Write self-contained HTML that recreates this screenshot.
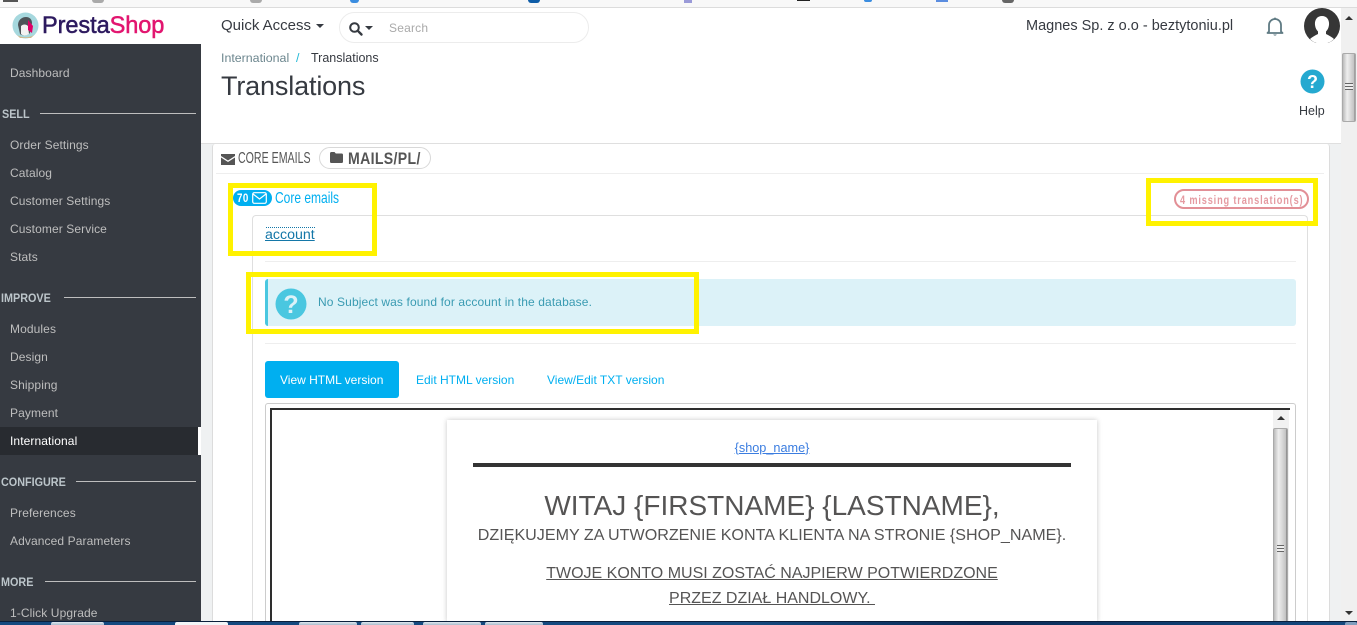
<!DOCTYPE html>
<html lang="en"><head><meta charset="utf-8"><title>Translations</title>
<style>
html,body{margin:0;padding:0}
body{width:1357px;height:625px;position:relative;overflow:hidden;background:#eff1f2;font-family:"Liberation Sans",Arial,sans-serif;color:#363a41}
.a{position:absolute;white-space:nowrap}
.b{position:absolute}
.n{font-size:12px;letter-spacing:.1px;color:#bebebe;left:10px;line-height:16px}
.h{font-size:12px;font-weight:bold;color:#bcc5ca;line-height:16px;transform:scaleX(.9);transform-origin:left center}
.r{position:absolute;height:1px;background:#bebebe;right:5px}
.cond{transform-origin:left center}
.tb{position:absolute;top:622px;height:3px;background:linear-gradient(#dfe8f0,#a9bccd);border-radius:2px 2px 0 0}
</style></head><body>

<!-- browser strip -->
<div class="b" style="left:0;top:0;width:1357px;height:7px;background:#f8f8f8"></div>
<div class="b" style="left:0;top:7px;width:1357px;height:1px;background:#dcdcdc"></div>
<div class="b" style="left:3px;top:0;width:15px;height:2px;background:#555"></div>
<div class="b" style="left:92px;top:0;width:12px;height:3px;background:#aaa;border-radius:0 0 6px 6px"></div>
<div class="b" style="left:250px;top:0;width:12px;height:3px;background:#aaa;border-radius:0 0 6px 6px"></div>
<div class="b" style="left:350px;top:0;width:9px;height:3px;background:#3b8de0;border-radius:0 0 6px 6px"></div>
<div class="b" style="left:528px;top:0;width:12px;height:3px;background:#0f5da8;border-radius:0 0 6px 6px"></div>
<div class="b" style="left:684px;top:0;width:8px;height:3px;background:#9a9ad8"></div>
<div class="b" style="left:797px;top:0;width:13px;height:1px;background:#222"></div>
<div class="b" style="left:864px;top:0;width:8px;height:2px;background:#3b8de0;border-radius:0 0 6px 6px"></div>
<div class="b" style="left:936px;top:0;width:12px;height:2px;background:#5b8de0"></div>
<div class="b" style="left:1002px;top:0;width:12px;height:3px;background:#666;border-radius:0 0 6px 6px"></div>

<!-- header -->
<div class="b" style="left:0;top:8px;width:1341px;height:36px;background:#fff"></div>
<div class="b" style="left:201px;top:44px;width:1140px;height:99px;background:#fff"></div>
<div class="b" style="left:201px;top:143px;width:1140px;height:1px;background:#dfdfdf"></div>

<svg class="b" style="left:12px;top:12px" width="27" height="27" viewBox="0 0 27 27">
<circle cx="13.5" cy="13.5" r="13" fill="#a6d8de"/>
<path d="M6 13c0-5 4-8 8-8s6 3 6 6l-2 10c-3 3-8 3-10 1z" fill="#4d5358"/>
<path d="M9 14c2-2 5-2 7 0l1 8c-3 2-6 2-8 0z" fill="#f2f2f2"/>
<path d="M16 8l5 6-1 7-4-3z" fill="#df0067"/>
<path d="M5 23c5 3 12 3 17 0l-3 3H8z" fill="#cdb98e"/>
</svg>
<div class="a" style="left:42px;top:11px;font-size:23.6px;line-height:30px;letter-spacing:-.1px;color:#2d1a5f;-webkit-text-stroke:.5px #2d1a5f">Presta<span style="color:#e2156f;-webkit-text-stroke:.5px #e2156f">Shop</span></div>

<div class="a" style="left:221px;top:17px;font-size:15px;line-height:18px;color:#363a41">Quick Access</div>
<div class="b" style="left:316px;top:24px;border:4px solid transparent;border-top:4px solid #363a41;border-bottom:0;border-left-width:4.5px;border-right-width:4.5px"></div>
<div class="b" style="left:339px;top:12px;width:248px;height:29px;border:1px solid #ececec;border-radius:16px;background:#fff"></div>
<svg class="b" style="left:348px;top:21px" width="16" height="16" viewBox="0 0 16 16"><circle cx="6.5" cy="6.5" r="4.3" fill="none" stroke="#363a41" stroke-width="2"/><path d="M9.8 9.8l3.7 3.7" stroke="#363a41" stroke-width="2.4" stroke-linecap="round"/></svg>
<div class="b" style="left:365px;top:26px;border:4px solid transparent;border-top:4px solid #363a41;border-bottom:0"></div>
<div class="a" style="left:389px;top:20px;font-size:12px;line-height:16px;letter-spacing:.2px;color:#a9a9a9">Search</div>

<div class="a" style="left:1026px;top:17px;font-size:14.5px;line-height:18px;color:#363a41">Magnes Sp. z o.o - beztytoniu.pl</div>
<svg class="b" style="left:1266px;top:16px" width="18" height="21" viewBox="0 0 18 21"><path d="M3 15.5V9a6 6 0 0 1 12 0v6.500l1.500 1.500h-15z" fill="none" stroke="#5f7a83" stroke-width="1.800" stroke-linejoin="round"/><path d="M7.200 18.500a2 2 0 0 0 3.600 0z" fill="#5f7a83"/><circle cx="9" cy="2.500" r="1" fill="#5f7a83"/></svg>
<svg class="b" style="left:1304px;top:8px" width="36" height="36" viewBox="0 0 36 36"><defs><clipPath id="av"><rect x="0" y="0" width="36" height="35"/></clipPath></defs><circle cx="18" cy="18" r="18" fill="#363636" clip-path="url(#av)"/><path d="M18 8c5 0 7.500 4 7 9-.4 3-1.500 5-3 6.500v2.500c3 1.500 6 3 8 5-3 3-7.500 5-12 5s-9-2-12-5c2-2 5-3.500 8-5v-2.500c-1.500-1.500-2.600-3.500-3-6.500-.5-5 2-9 7-9z" fill="#fff" clip-path="url(#av)"/></svg>

<div class="a" style="left:221px;top:50px;font-size:12.4px;line-height:16px;color:#6c868e">International</div>
<div class="a" style="left:296px;top:50px;font-size:12.4px;line-height:16px;color:#25b9d7">/</div>
<div class="a" style="left:311px;top:50px;font-size:12.5px;line-height:16px;color:#363a41">Translations</div>
<div class="a" style="left:221px;top:69px;font-size:27px;line-height:34px;letter-spacing:-.15px;color:#363a41">Translations</div>
<svg class="b" style="left:1300px;top:69px" width="25" height="25" viewBox="0 0 25 25"><circle cx="12.500" cy="12.500" r="12" fill="#25a9d0"/><text x="12.500" y="19" text-anchor="middle" font-family="Liberation Sans" font-weight="bold" font-size="18" fill="#fff">?</text></svg>
<div class="a" style="left:1299px;top:103px;font-size:12.5px;line-height:16px;color:#363a41">Help</div>

<!-- sidebar -->
<div class="b" style="left:0;top:44px;width:201px;height:578px;background:#363a41"></div>
<div class="a n" style="top:65px">Dashboard</div>
<div class="a h" style="left:2px;top:106px">SELL</div><div class="r" style="left:40px;top:113px;width:156px;right:auto"></div>
<div class="a n" style="top:137px">Order Settings</div>
<div class="a n" style="top:165px">Catalog</div>
<div class="a n" style="top:193px">Customer Settings</div>
<div class="a n" style="top:221px">Customer Service</div>
<div class="a n" style="top:249px">Stats</div>
<div class="a h" style="left:1px;top:290px">IMPROVE</div><div class="r" style="left:64px;top:297px;width:132px;right:auto"></div>
<div class="a n" style="top:321px">Modules</div>
<div class="a n" style="top:349px">Design</div>
<div class="a n" style="top:377px">Shipping</div>
<div class="a n" style="top:405px">Payment</div>
<div class="b" style="left:0;top:427px;width:201px;height:28px;background:#282b30"></div>
<div class="b" style="left:198px;top:427px;width:3px;height:28px;background:#fff"></div>
<div class="a n" style="top:433px;color:#fff">International</div>
<div class="a h" style="left:1px;top:474px">CONFIGURE</div><div class="r" style="left:76px;top:481px;width:120px;right:auto"></div>
<div class="a n" style="top:505px">Preferences</div>
<div class="a n" style="top:533px">Advanced Parameters</div>
<div class="a h" style="left:1px;top:574px">MORE</div><div class="r" style="left:45px;top:581px;width:151px;right:auto"></div>
<div class="a n" style="top:605px">1-Click Upgrade</div>

<!-- panel -->
<div class="b" style="left:212px;top:144px;width:1116px;height:478px;background:#fff;border-left:1px solid #dcdcdc;border-right:1px solid #dcdcdc;border-radius:3px 3px 0 0"></div>
<svg class="b" style="left:221px;top:154px" width="14" height="11" viewBox="0 0 14 11"><path d="M0 0h14v2L7 6.500 0 2z" fill="#555"/><path d="M0 3.500l7 4.500 7-4.500V11H0z" fill="#555"/></svg>
<div class="a cond" style="left:238px;top:150px;font-size:15.5px;line-height:17px;color:#555;transform:scaleX(.685)">CORE EMAILS</div>
<div class="b" style="left:319px;top:147px;width:110px;height:20px;border:1px solid #d8d8d8;border-radius:11px"></div>
<svg class="b" style="left:330px;top:152px" width="13" height="11" viewBox="0 0 13 11"><path d="M0 1.500C0 .7.500 0 1.300 0h3.200l1.300 1.500h6C12.500 1.500 13 2 13 2.800v7c0 .7-.5 1.200-1.200 1.200H1.200C.5 11 0 10.500 0 9.800z" fill="#555"/></svg>
<div class="a cond" style="left:348px;top:150px;font-size:17px;line-height:18px;font-weight:bold;letter-spacing:.4px;color:#555;transform:scaleX(.83)">MAILS/PL/</div>
<div class="b" style="left:216px;top:173px;width:1108px;height:1px;background:#eee"></div>

<div class="b" style="left:233px;top:190px;width:39px;height:16px;background:#00aff0;border-radius:8px"></div>
<div class="a cond" style="left:237px;top:192px;font-size:11.500px;line-height:15px;font-weight:bold;letter-spacing:.5px;color:#fff;transform:scaleX(.85)">70</div>
<svg class="b" style="left:252px;top:192px" width="15" height="12" viewBox="0 0 15 12"><rect x=".7" y=".7" width="13.600" height="10.600" rx="1.500" fill="none" stroke="#fff" stroke-width="1.200"/><path d="M1 2l6.500 5L14 2" fill="none" stroke="#fff" stroke-width="1.200"/></svg>
<div class="a cond" style="left:275px;top:190px;font-size:16px;line-height:17px;color:#00aff0;transform:scaleX(.75)">Core emails</div>

<div class="b" style="left:1174px;top:189px;width:135px;height:20px;border:2px solid #e28f96;border-radius:10px;box-sizing:border-box"></div>
<div class="a cond" style="left:1180px;top:194px;font-size:11.500px;line-height:14px;letter-spacing:1.050px;font-weight:bold;color:#e59aa1;transform:scaleX(.8)">4 missing translation(s)</div>

<!-- account box -->
<div class="b" style="left:252px;top:215px;width:1056px;height:407px;border:1px solid #dfdfdf;border-bottom:0;border-radius:4px 4px 0 0;box-sizing:border-box;background:#fff"></div>
<div class="a" style="left:265px;top:226px;font-size:14.2px;line-height:18px;color:#1477a8;text-decoration:underline">account</div>
<div class="b" style="left:266px;top:227px;width:49px;height:0;border-top:1px dotted #1477a8"></div>
<div class="b" style="left:265px;top:261px;width:1031px;height:1px;background:#eee"></div>

<div class="b" style="left:265px;top:279px;width:1031px;height:47px;background:#dcf2f8;border-radius:3px;border-left:3px solid #4ac7e0;box-sizing:border-box"></div>
<svg class="b" style="left:275px;top:288px" width="32" height="32" viewBox="0 0 32 32"><circle cx="16" cy="16" r="15.500" fill="#4ac7e0"/><text x="16" y="25" text-anchor="middle" font-family="Liberation Sans" font-weight="bold" font-size="25" fill="#dcf2f8">?</text></svg>
<div class="a" style="left:318px;top:294px;font-size:12px;line-height:16px;letter-spacing:.12px;color:#3a9bb2">No Subject was found for account in the database.</div>
<div class="b" style="left:265px;top:343px;width:1031px;height:1px;background:#eee"></div>

<div class="b" style="left:265px;top:361px;width:134px;height:37px;background:#00aff0;border-radius:3px"></div>
<div class="a" style="left:280px;top:372px;font-size:12px;line-height:16px;color:#fff">View HTML version</div>
<div class="a" style="left:416px;top:372px;font-size:12px;line-height:16px;color:#00aff0">Edit HTML version</div>
<div class="a" style="left:547px;top:372px;font-size:12px;line-height:16px;color:#00aff0">View/Edit TXT version</div>

<!-- iframe -->
<div class="b" style="left:265px;top:403px;width:1031px;height:219px;border:1px solid #ccc;border-bottom:0;border-radius:3px 3px 0 0;box-sizing:border-box;background:#fff"></div>
<div class="b" style="left:270px;top:408px;width:1020px;height:214px;border:2px solid #2e2e2e;border-width:2px 0 0 2px;box-sizing:border-box;background:#fff"></div>
<div class="b" style="left:1273px;top:410px;width:16px;height:212px;background:#f1f1f1"></div>
<div class="b" style="left:1277px;top:416px;border:4px solid transparent;border-bottom:4px solid #333;border-top:0"></div>
<div class="b" style="left:1273px;top:428px;width:15px;height:194px;background:linear-gradient(90deg,#bbb,#eee 35%,#c4c4c4 90%,#777);border-radius:2px 2px 0 0;box-sizing:border-box;border:1px solid #aaa;border-bottom:0"></div>
<div class="b" style="left:1277px;top:545px;width:7px;height:7px;background:repeating-linear-gradient(#666 0 1px,#eee 1px 3px)"></div>

<!-- mail card -->
<div class="b" style="left:447px;top:420px;width:650px;height:202px;background:#fff;box-shadow:0 0 5px rgba(0,0,0,.22)"></div>
<div class="a" style="left:447px;width:650px;text-align:center;top:440px;font-size:12.7px;line-height:16px;color:#3b7de0;text-decoration:underline">{shop_name}</div>
<div class="b" style="left:473px;top:463px;width:598px;height:4px;background:#333"></div>
<div class="a" style="left:447px;width:650px;text-align:center;top:489px;font-size:28px;line-height:34px;color:#555454">WITAJ {FIRSTNAME} {LASTNAME},</div>
<div class="a" style="left:447px;width:650px;text-align:center;top:525px;font-size:16.1px;line-height:20px;color:#555454">DZIĘKUJEMY ZA UTWORZENIE KONTA KLIENTA NA STRONIE {SHOP_NAME}.</div>
<div class="a" style="left:447px;width:650px;text-align:center;top:564px;font-size:16px;line-height:20px;color:#555454;text-decoration:underline">TWOJE KONTO MUSI ZOSTAĆ NAJPIERW POTWIERDZONE</div>
<div class="a" style="left:447px;width:650px;text-align:center;top:589px;font-size:16px;line-height:20px;color:#555454;text-decoration:underline;white-space:pre">PRZEZ DZIAŁ HANDLOWY. </div>

<!-- yellow highlight boxes -->
<div class="b" style="left:228px;top:183px;width:149px;height:73px;border:5px solid #fff200;box-sizing:border-box"></div>
<div class="b" style="left:246px;top:272px;width:453px;height:62px;border:5px solid #fff200;box-sizing:border-box"></div>
<div class="b" style="left:1146px;top:178px;width:172px;height:48px;border:5px solid #fff200;box-sizing:border-box"></div>

<!-- page scrollbar -->
<div class="b" style="left:1341px;top:8px;width:16px;height:614px;background:#f0f0f0"></div>
<div class="b" style="left:1345px;top:16px;border:4px solid transparent;border-bottom:4px solid #333;border-top:0"></div>
<div class="b" style="left:1342px;top:53px;width:14px;height:69px;background:linear-gradient(90deg,#bbb,#eee 35%,#c4c4c4 90%,#888);border:1px solid #aaa;border-radius:2px;box-sizing:border-box"></div>
<div class="b" style="left:1345px;top:83px;width:8px;height:7px;background:repeating-linear-gradient(#666 0 1px,#eee 1px 3px)"></div>
<div class="b" style="left:1345px;top:611px;border:4px solid transparent;border-top:4px solid #333;border-bottom:0"></div>

<!-- taskbar -->
<div class="b" style="left:0;top:621px;width:1357px;height:4px;background:linear-gradient(90deg,#14497f 0,#14497f 55%,#0b2a55 72%,#0e3a6c 85%,#14497f 100%);border-top:1px solid #0a1f3c;box-sizing:border-box"></div>
<div class="tb" style="left:51px;width:53px"></div>
<div class="tb" style="left:175px;width:53px;background:#f2f5f8"></div>
<div class="tb" style="left:299px;width:58px"></div>
<div class="tb" style="left:361px;width:53px"></div>
<div class="tb" style="left:423px;width:58px"></div>
<div class="tb" style="left:485px;width:58px"></div>
<div class="tb" style="left:1345px;width:12px;background:#7f9dbd"></div>
</body></html>
